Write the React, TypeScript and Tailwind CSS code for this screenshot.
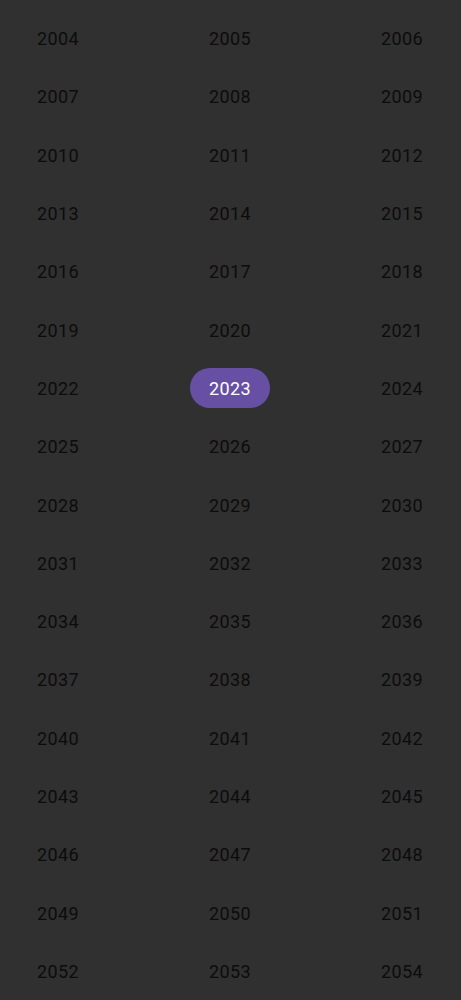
import React from "react";

export default function App() {
  const years: number[] = [];
  for (let y = 2004; y <= 2054; y++) years.push(y);
  return (
    <div
      className="w-[461px] h-[1000px] bg-[#303030] overflow-hidden pt-[9.5px] pl-[18px] pr-[19px]"
      style={{ fontFamily: "Roboto, 'Noto Sans', sans-serif" }}
    >
      <div className="grid grid-cols-[80px_80px_80px] justify-between">
        {years.map((y) => (
          <div key={y} className="h-[58.31px] flex items-center justify-center">
            {y === 2023 ? (
              <div className="w-[80px] h-[40px] rounded-full bg-[#6750a4] flex items-center justify-center text-white text-[18px] tracking-[0.4px]">
                {y}
              </div>
            ) : (
              <span className="text-[#0c0c0c] text-[18px] tracking-[0.4px]">{y}</span>
            )}
          </div>
        ))}
      </div>
    </div>
  );
}
